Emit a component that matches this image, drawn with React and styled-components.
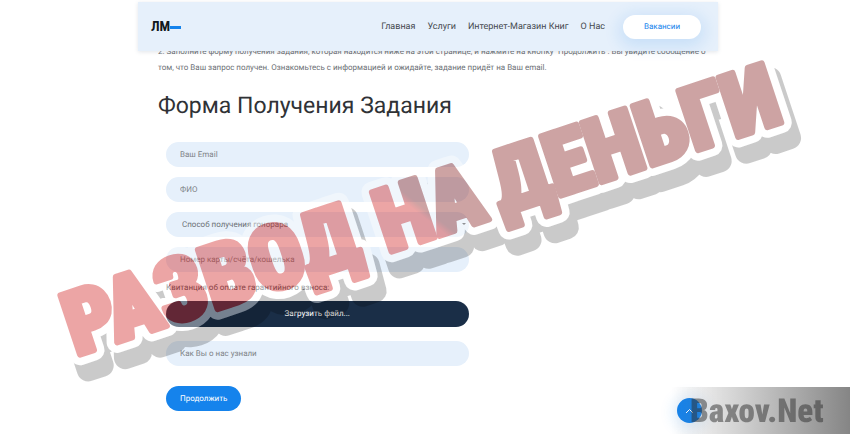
import { useState } from "react";
import styled, { createGlobalStyle } from "styled-components";

const GlobalStyle = createGlobalStyle`
  * {
    box-sizing: border-box;
  }

  body {
    margin: 0;
    background: #fff;
    color: #6c7075;
    font-family: Roboto, "Liberation Sans", sans-serif;
    font-size: 8px;
    text-rendering: geometricPrecision;
    overflow-x: hidden;
  }
`;

const links = ["Главная", "Услуги", "Интернет-Магазин Книг", "О Нас"];

const Page = styled.div`
  display: grid;
  grid-template-columns: 138fr 580fr 132fr;
  padding-top: 2px;
`;

const Column = styled.div`
  grid-column: 2;
`;

const Header = styled.header`
  position: sticky;
  top: 2px;
  z-index: 2;
  display: flex;
  align-items: center;
  justify-content: space-between;
  height: 49px;
  padding: 0 17px 0 13px;
  background: #e6f0fb;
  box-shadow: 0 1px 4px rgba(60, 80, 110, 0.15);
`;

const Logo = styled.a`
  display: flex;
  align-items: center;
  color: #111820;
  font: bold 14px "Roboto Condensed", Roboto, sans-serif;
  text-decoration: none;

  &::after {
    content: "";
    width: 11px;
    height: 3px;
    margin-top: 2px;
    background: #1583ec;
  }
`;

const Nav = styled.nav`
  display: flex;
  align-items: center;
  gap: 12px;
`;

const NavLink = styled.a`
  color: #45494e;
  font-size: 9px;
  text-decoration: none;
`;

const Vacancies = styled.a`
  width: 78px;
  margin-left: 6px;
  border-radius: 12px;
  background: #fff;
  box-shadow: 0 4px 16px 4px rgba(21, 131, 236, 0.14);
  color: #1583ec;
  line-height: 24px;
  text-align: center;
  text-decoration: none;
`;

const Content = styled.main`
  padding: 0 10px 0 20px;
`;

const Note = styled.p`
  margin: -7px 0 0;
  line-height: 16px;
`;

const Title = styled.h1`
  margin: 15px 0 21px;
  color: #303236;
  font-size: 23px;
  font-weight: 400;
  line-height: 30px;
`;

const Form = styled.form`
  display: flex;
  flex-direction: column;
  gap: 10px;
  width: 55%;
  margin-left: 8px;
`;

const Field = styled.input`
  width: 100%;
  height: 25px;
  padding: 0 14px;
  border: none;
  border-radius: 13px;
  background: #e6f0fb;
  color: #6c7075;
  font: inherit;
  text-rendering: inherit;

  &::placeholder {
    color: #808488;
    opacity: 1;
  }
`;

const SelectWrap = styled.div`
  position: relative;

  &::after {
    content: "";
    position: absolute;
    top: 11px;
    right: 3px;
    border: 2px solid transparent;
    border-top-color: #45494e;
  }
`;

const Select = styled(Field)`
  appearance: none;
  padding-left: 16px;
`;

const FileGroup = styled.div`
  display: flex;
  flex-direction: column;
  gap: 7px;
  margin-bottom: 4px;
`;

const FileLabel = styled.label`
  color: #55595e;
  line-height: 12px;
`;

const Upload = styled.label`
  border-radius: 13px;
  background: #1a2e47;
  color: #fff;
  line-height: 26px;
  text-align: center;
  cursor: pointer;

  input {
    position: absolute;
    width: 1px;
    height: 1px;
    opacity: 0;
  }
`;

const Submit = styled.button`
  align-self: flex-start;
  height: 25px;
  margin-top: 10px;
  padding: 0 14px;
  border: none;
  border-radius: 13px;
  background: #1583ec;
  color: #fff;
  font: inherit;
  text-rendering: inherit;
  cursor: pointer;
`;

const ToTop = styled.button`
  position: fixed;
  right: 148px;
  bottom: 11px;
  display: flex;
  align-items: center;
  justify-content: center;
  width: 25px;
  height: 25px;
  padding: 0;
  border: none;
  border-radius: 50%;
  background: #1583ec;
  box-shadow: 0 2px 14px 5px rgba(21, 131, 236, 0.12);
`;

const SiteMark = styled.div`
  position: fixed;
  right: 0;
  bottom: 0;
  width: 178px;
  height: 47px;
  padding: 7px 0 0 18px;
  background: linear-gradient(90deg, rgba(120, 120, 120, 0), rgba(110, 110, 110, 0.25) 30%, rgba(90, 90, 90, 0.74));
  color: rgba(45, 45, 45, 0.5);
  font: 900 33px/36px "Roboto Condensed", Roboto, sans-serif;
  pointer-events: none;
`;

const StampLayer = styled.svg`
  position: absolute;
  top: 0;
  left: 0;
  z-index: 3;
  width: 100%;
  pointer-events: none;

  text {
    font: 900 88px "Roboto Condensed", Roboto, sans-serif;
    stroke-linejoin: round;
  }
`;

const stampWords = [
  { text: "РАЗВОД", x: 0 },
  { text: "НА", x: 328 },
  { text: "ДЕНЬГИ", x: 449 },
];

function StampText({ x = 0, y = 0, paint, outline, opacity }) {
  return (
    <g opacity={opacity}>
      <text y={y} fill={paint} stroke={paint} strokeWidth={outline}>
        {stampWords.map((word) => (
          <tspan key={word.text} x={word.x + x}>{word.text}</tspan>
        ))}
      </text>
    </g>
  );
}

function Stamp() {
  return (
    <StampLayer viewBox="0 0 850 434" role="img" aria-label="РАЗВОД НА ДЕНЬГИ">
      <defs>
        <linearGradient id="ink" gradientUnits="userSpaceOnUse" x1="357" y1="-48" x2="363" y2="-52">
          <stop offset="0" stopColor="#cf1e1e" />
          <stop offset="1" stopColor="#821919" />
        </linearGradient>
      </defs>
      <g opacity="0.4" transform="translate(76 356) rotate(-18.3)">
        <StampText x={3} y={17} paint="#000" outline="23" opacity="0.52" />
        <StampText paint="#fff" outline="21" />
        <StampText paint="url(#ink)" outline="6" />
      </g>
    </StampLayer>
  );
}

export default function App() {
  const [fileName, setFileName] = useState("");

  return (
    <>
      <GlobalStyle />
      <Page>
        <Column>
          <Header>
            <Logo href="#">ЛМ</Logo>
            <Nav>
              {links.map((link) => (
                <NavLink key={link} href="#">{link}</NavLink>
              ))}
              <Vacancies href="#">Вакансии</Vacancies>
            </Nav>
          </Header>

          <Content>
            <Note>
              2. Заполните форму получения задания, которая находится ниже на этой странице, и нажмите на кнопку "Продолжить". Вы увидите сообщение о
              том, что Ваш запрос получен. Ознакомьтесь с информацией и ожидайте, задание придёт на Ваш email.
            </Note>
            <Title>Форма Получения Задания</Title>

            <Form onSubmit={(e) => e.preventDefault()}>
              <Field type="email" placeholder="Ваш Email" aria-label="Ваш Email" />
              <Field placeholder="ФИО" aria-label="ФИО" />
              <SelectWrap>
                <Select as="select" aria-label="Способ получения гонорара">
                  <option>Способ получения гонорара</option>
                </Select>
              </SelectWrap>
              <Field placeholder="Номер карты/счёта/кошелька" aria-label="Номер карты/счёта/кошелька" />
              <FileGroup>
                <FileLabel htmlFor="receipt">Квитанция об оплате гарантийного взноса:</FileLabel>
                <Upload>
                  {fileName || "Загрузить файл..."}
                  <input id="receipt" type="file" onChange={(e) => setFileName(e.target.files[0]?.name || "")} />
                </Upload>
              </FileGroup>
              <Field placeholder="Как Вы о нас узнали" aria-label="Как Вы о нас узнали" />
              <Submit>Продолжить</Submit>
            </Form>
          </Content>
        </Column>
      </Page>

      <ToTop aria-label="Наверх" onClick={() => window.scrollTo(0, 0)}>
        <svg width="9" height="6" viewBox="0 0 9 6" fill="none" stroke="#fff">
          <path d="M1 5 4.500 1.500 8 5" />
        </svg>
      </ToTop>
      <SiteMark>Baxov.Net</SiteMark>
      <Stamp />
    </>
  );
}
